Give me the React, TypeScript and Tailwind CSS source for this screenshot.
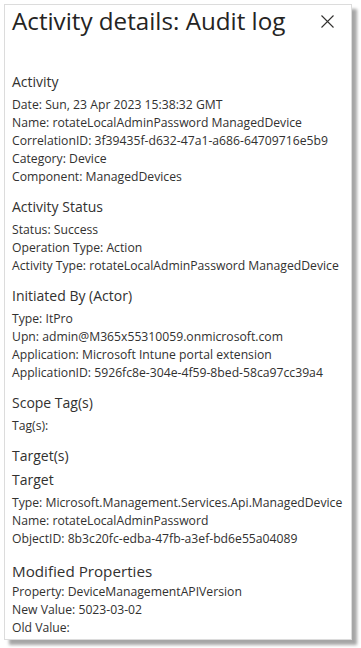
import React from 'react';

type Section = {
  title: string;
  size?: 'md' | 'lg';
  sub?: string;
  rows: string[];
};

const SECTIONS: Section[] = [
  {
    title: 'Activity',
    rows: [
      'Date: Sun, 23 Apr 2023 15:38:32 GMT',
      'Name: rotateLocalAdminPassword ManagedDevice',
      'CorrelationID: 3f39435f-d632-47a1-a686-64709716e5b9',
      'Category: Device',
      'Component: ManagedDevices',
    ],
  },
  {
    title: 'Activity Status',
    rows: [
      'Status: Success',
      'Operation Type: Action',
      'Activity Type: rotateLocalAdminPassword ManagedDevice',
    ],
  },
  {
    title: 'Initiated By (Actor)',
    rows: [
      'Type: ItPro',
      'Upn: admin@M365x55310059.onmicrosoft.com',
      'Application: Microsoft Intune portal extension',
      'ApplicationID: 5926fc8e-304e-4f59-8bed-58ca97cc39a4',
    ],
  },
  {
    title: 'Scope Tag(s)',
    rows: ['Tag(s):'],
  },
  {
    title: 'Target(s)',
    sub: 'Target',
    rows: [
      'Type: Microsoft.Management.Services.Api.ManagedDevice',
      'Name: rotateLocalAdminPassword',
      'ObjectID: 8b3c20fc-edba-47fb-a3ef-bd6e55a04089',
    ],
  },
  {
    title: 'Modified Properties',
    size: 'lg',
    rows: [
      'Property: DeviceManagementAPIVersion',
      'New Value: 5023-03-02',
      'Old Value:',
    ],
  },
];

export default function App() {
  return (
    <div className="w-[361px] h-[648px] bg-white overflow-hidden font-['Open_Sans',sans-serif] text-[#323130]">
      <div className="ml-[4px] mt-[4px] w-[348px] h-[636px] bg-white border border-[#dcdcdc] shadow-[5px_5px_3px_rgba(0,0,0,0.35)] px-[7px]">
        {/* Header */}
        <div className="flex items-center justify-between h-[32px]">
          <h1 className="text-[24.2px] leading-[32px] font-normal text-[#252423]">
            Activity details: Audit log
          </h1>
          <button className="mr-[10px] mt-[1px] text-[#323130]" title="Close">
            <svg width="13" height="13" viewBox="0 0 13 13" fill="none" stroke="currentColor" strokeWidth="1.1">
              <path d="M0.5 0.5L12.5 12.5M12.5 0.5L0.5 12.5" />
            </svg>
          </button>
        </div>

        <div className="mt-[35px] flex flex-col">
          {SECTIONS.map((s, i) => (
            <div key={s.title} className={i === 0 ? '' : 'mt-[11px]'}>
              <div
                className={
                  s.size === 'lg'
                    ? 'text-[15.2px] leading-[24px]'
                    : 'text-[14px] leading-[20px]'
                }
              >
                {s.title}
              </div>
              {s.sub && <div className="mt-[4px] text-[14px] leading-[20px]">{s.sub}</div>}
              <div className={s.size === 'lg' ? 'mt-0' : 'mt-[4px]'}>
                {s.rows.map((r) => (
                  <div key={r} className="text-[12.2px] leading-[18px] whitespace-nowrap">
                    {r}
                  </div>
                ))}
              </div>
            </div>
          ))}
        </div>
      </div>
    </div>
  );
}
